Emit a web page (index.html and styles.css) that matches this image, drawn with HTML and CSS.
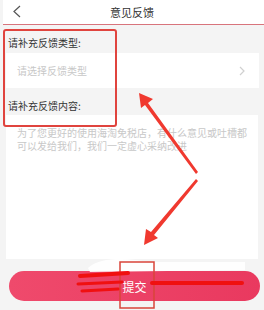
FILE: index.html
```html
<!DOCTYPE html>
<html lang="zh-CN">
<head>
  <meta charset="UTF-8">
  <meta name="viewport" content="width=device-width, initial-scale=1.0">
  <title>意见反馈</title>
  <link rel="stylesheet" href="styles.css">
</head>
<body>
  <div class="page">
    <header class="topbar">
      <svg class="back" width="10" height="13" viewBox="0 0 10 13">
        <path d="M8 1 L2 6.5 L8 12" fill="none" stroke="#555" stroke-width="1.2"/>
      </svg>
      <h1>意见反馈</h1>
    </header>

    <main class="form">
      <div class="label first">请补充反馈类型:</div>
      <div class="select-row">
        <span class="placeholder">请选择反馈类型</span>
        <svg class="chevron" width="6" height="10" viewBox="0 0 6 10">
          <path d="M1 1 L5 5 L1 9" fill="none" stroke="#d0d0d0" stroke-width="1.2"/>
        </svg>
      </div>

      <div class="label">请补充反馈内容:</div>
      <div class="textarea">
        <p class="placeholder">为了您更好的使用海淘免税店，有什么意见或吐槽都可以发给我们，我们一定虚心采纳改进</p>
      </div>

      <button type="button" class="submit">提交</button>
    </main>

    <!-- markup drawn on top of the screenshot -->
    <svg class="marks" width="264" height="310" viewBox="0 0 264 310">
      <rect x="4" y="30" width="112" height="96" rx="2" fill="none" stroke="#e0443e" stroke-width="2"/>
      <polygon points="139,93 153,99 148,103 198,172 196,174 145,105 141,108" fill="#f0392f"/>
      <polygon points="144,245 146,229 151,232 196,179 198,181 154,235 158,238" fill="#f0392f"/>
      <path d="M88 268 C 100 256, 130 258, 150 262 L 245 262 L 245 270 L 90 272 Z" fill="#fff" opacity="0.9"/>
      <rect x="120" y="262" width="34" height="46" fill="none" stroke="#d9443a" stroke-width="1.5"/>
      <path d="M80 276 L 128 273" stroke="#f01010" stroke-width="4" stroke-linecap="round"/>
      <path d="M78 284 L 122 282 M82 291 L 118 289" stroke="#f01010" stroke-width="3" stroke-linecap="round"/>
      <path d="M152 283 L 242 283" stroke="#f01010" stroke-width="4" stroke-linecap="round"/>
    </svg>
  </div>
</body>
</html>
```

FILE: styles.css
```css
body {
    margin: 0;
    font-family: "Noto Sans CJK SC", "Noto Sans", sans-serif;
    background: #f4f4f4;
    color: #333;
}
.page {
    position: relative;
    width: 264px;
    height: 310px;
    overflow: hidden;
}
.topbar {
    display: flex;
    align-items: center;
    justify-content: center;
    position: relative;
    height: 24px;
    background: #fff;
    border-bottom: 1px solid #d8747c;
    margin-left: 3px;
}
.topbar h1 {
    margin: 0;
    font-size: 11px;
    font-weight: 400;
    color: #333;
    margin-left: -3px;
}
.back {
    position: absolute;
    left: 9px;
    top: 5px;
}
.label {
    box-sizing: border-box;
    height: 27px;
    padding: 12px 0 0 8px;
    font-size: 10px;
    line-height: 12px;
    color: #333;
}
.label.first {
    height: 28px;
    padding-top: 12px;
}
.select-row {
    display: flex;
    align-items: center;
    justify-content: space-between;
    height: 35px;
    margin: 0 5px 0 6px;
    padding: 0 14px 0 11px;
    background: #fff;
}
.placeholder {
    margin: 0;
    font-size: 10px;
    line-height: 13px;
    color: #c8c8c8;
}
.textarea {
    box-sizing: border-box;
    height: 144px;
    margin: 0 6px 0 6px;
    padding: 11px 8px 0 11px;
    background: #fff;
}
.submit {
    display: block;
    width: 251px;
    height: 30px;
    margin: 12px 0 0 9px;
    border: none;
    border-radius: 15px;
    background: linear-gradient(90deg, #ef4a6c, #e9395f);
    color: #fff;
    font-family: inherit;
    font-size: 12px;
}
.marks {
    position: absolute;
    left: 0;
    top: 0;
    pointer-events: none;
}
```
